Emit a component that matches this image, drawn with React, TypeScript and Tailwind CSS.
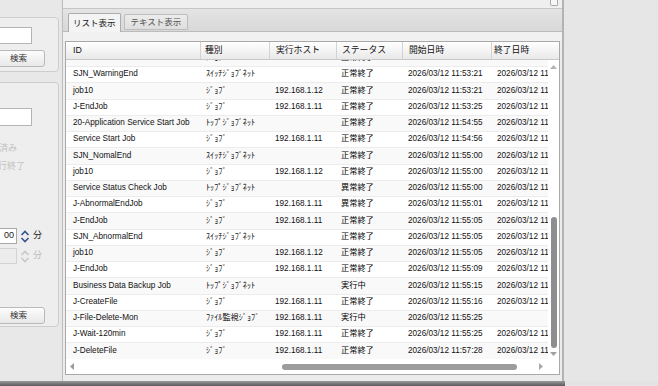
const FONT = "font-['Liberation_Sans','Noto_Sans_CJK_JP',sans-serif]";

type Row = [string, string, string, string, string, string];

const rows: Row[] = [
  ['Service Health Check Job', 'ｼﾞｮﾌﾞ', '192.168.1.11', '正常終了', '2026/03/12 11:53:17', '2026/03/12 11:53:19'],
  ['SJN_WarningEnd', 'ｽｲｯﾁｼﾞｮﾌﾞﾈｯﾄ', '', '正常終了', '2026/03/12 11:53:21', '2026/03/12 11:53:21'],
  ['job10', 'ｼﾞｮﾌﾞ', '192.168.1.12', '正常終了', '2026/03/12 11:53:21', '2026/03/12 11:53:24'],
  ['J-EndJob', 'ｼﾞｮﾌﾞ', '192.168.1.11', '正常終了', '2026/03/12 11:53:25', '2026/03/12 11:53:27'],
  ['20-Application Service Start Job', 'ﾄｯﾌﾟｼﾞｮﾌﾞﾈｯﾄ', '', '正常終了', '2026/03/12 11:54:55', '2026/03/12 11:55:10'],
  ['Service Start Job', 'ｼﾞｮﾌﾞ', '192.168.1.11', '正常終了', '2026/03/12 11:54:56', '2026/03/12 11:54:59'],
  ['SJN_NomalEnd', 'ｽｲｯﾁｼﾞｮﾌﾞﾈｯﾄ', '', '正常終了', '2026/03/12 11:55:00', '2026/03/12 11:55:00'],
  ['job10', 'ｼﾞｮﾌﾞ', '192.168.1.12', '正常終了', '2026/03/12 11:55:00', '2026/03/12 11:55:03'],
  ['Service Status Check Job', 'ﾄｯﾌﾟｼﾞｮﾌﾞﾈｯﾄ', '', '異常終了', '2026/03/12 11:55:00', '2026/03/12 11:55:08'],
  ['J-AbnormalEndJob', 'ｼﾞｮﾌﾞ', '192.168.1.11', '異常終了', '2026/03/12 11:55:01', '2026/03/12 11:55:04'],
  ['J-EndJob', 'ｼﾞｮﾌﾞ', '192.168.1.11', '正常終了', '2026/03/12 11:55:05', '2026/03/12 11:55:07'],
  ['SJN_AbnormalEnd', 'ｽｲｯﾁｼﾞｮﾌﾞﾈｯﾄ', '', '正常終了', '2026/03/12 11:55:05', '2026/03/12 11:55:05'],
  ['job10', 'ｼﾞｮﾌﾞ', '192.168.1.12', '正常終了', '2026/03/12 11:55:05', '2026/03/12 11:55:08'],
  ['J-EndJob', 'ｼﾞｮﾌﾞ', '192.168.1.11', '正常終了', '2026/03/12 11:55:09', '2026/03/12 11:55:11'],
  ['Business Data Backup Job', 'ﾄｯﾌﾟｼﾞｮﾌﾞﾈｯﾄ', '', '実行中', '2026/03/12 11:55:15', '2026/03/12 11:55:16'],
  ['J-CreateFile', 'ｼﾞｮﾌﾞ', '192.168.1.11', '正常終了', '2026/03/12 11:55:16', '2026/03/12 11:55:18'],
  ['J-File-Delete-Mon', 'ﾌｧｲﾙ監視ｼﾞｮﾌﾞ', '192.168.1.11', '実行中', '2026/03/12 11:55:25', ''],
  ['J-Wait-120min', 'ｼﾞｮﾌﾞ', '192.168.1.11', '正常終了', '2026/03/12 11:55:25', '2026/03/12 11:57:25'],
  ['J-DeleteFile', 'ｼﾞｮﾌﾞ', '192.168.1.11', '正常終了', '2026/03/12 11:57:28', '2026/03/12 11:57:30'],
];

const cols = 'grid grid-cols-[135px_69px_67px_66px_89px_120px]';

function Tri({ dir, color = '#a6a6a6' }: { dir: 'up' | 'down' | 'left' | 'right'; color?: string }) {
  const pts = {
    up: '0,5 3.5,1 7,5',
    down: '0,1 3.5,5 7,1',
    left: '5,0 1,3.5 5,7',
    right: '1,0 5,3.5 1,7',
  }[dir];
  return (
    <svg width="7" height="7" viewBox="0 0 7 7">
      <polygon points={pts} fill={color} />
    </svg>
  );
}

function Chevron({ up, color }: { up?: boolean; color: string }) {
  return (
    <svg width="10" height="6" viewBox="0 0 10 6">
      <path d={up ? 'M1.5 5 L5 1.5 L8.5 5' : 'M1.5 1 L5 4.5 L8.5 1'} fill="none" stroke={color} strokeWidth="1.6" />
    </svg>
  );
}

function Button({ label, className }: { label: string; className: string }) {
  return (
    <div
      className={`w-[150px] h-[17px] rounded-[3px] border border-[#b9b9b9] bg-gradient-to-b from-[#fdfdfd] to-[#e8e8e8] flex items-center justify-end pr-[17px] text-[8.5px] text-[#333] ${className}`}
    >
      {label}
    </div>
  );
}

function Spinner({ disabled, className }: { disabled?: boolean; className: string }) {
  return (
    <div className={`flex items-center justify-end ${className}`}>
      <div
        className={`w-[150px] h-[16px] border flex items-center justify-end pr-[2px] text-[9px] ${
          disabled ? 'bg-[#ececec] border-[#d2d2d2] text-[#aaa]' : 'bg-white border-[#a9a9a9] text-[#222]'
        }`}
      >
        {disabled ? '' : '00'}
      </div>
      <div className="w-[13px] ml-[1px] flex flex-col items-center gap-[1px]">
        <Chevron up color={disabled ? '#c8c8c8' : '#34558f'} />
        <Chevron color={disabled ? '#c8c8c8' : '#34558f'} />
      </div>
      <div className={`w-[14px] pl-[2px] text-[9px] ${disabled ? 'text-[#bdbdbd]' : 'text-[#222]'}`}>分</div>
    </div>
  );
}

function LeftPanel() {
  return (
    <div className="w-[60px] h-full overflow-hidden flex justify-end bg-[#e8e8e8]">
      <div className="w-[200px] shrink-0 pr-[1px] flex flex-col">
        <div className="mt-[17px] h-[55px] rounded-[4px] border border-[#cdcdcd] bg-[#eeeeee] flex flex-col items-end">
          <div className="w-[150px] h-[17px] mt-[9px] mr-[26px] bg-white border border-[#b4b4b4]" />
          <Button label="検索" className="mt-[6px] mr-[13px]" />
        </div>
        <div className="mt-[10px] h-[245px] rounded-[4px] border border-[#cdcdcd] bg-[#eeeeee] flex flex-col items-end">
          <div className="w-[150px] h-[18px] mt-[25px] mr-[26px] bg-white border border-[#b4b4b4]" />
          <div className="mt-[16px] mr-[41px] text-[9px] text-[#c2c2c2] leading-[12px] whitespace-nowrap">確認済み</div>
          <div className="mt-[6px] mr-[33px] text-[9px] text-[#c2c2c2] leading-[12px] whitespace-nowrap">実行終了</div>
          <Spinner className="mt-[56px] mr-[13px]" />
          <Spinner disabled className="mt-[4px] mr-[13px]" />
          <Button label="検索" className="mt-[43px] mr-[13px]" />
        </div>
      </div>
    </div>
  );
}

function Table() {
  return (
    <div className="mx-[2px] h-[334px] border border-[#a9a9a9] bg-white flex flex-col">
      <div className={`${cols} h-[18px] shrink-0 bg-gradient-to-b from-[#ffffff] to-[#e9e9e9] border-b border-[#c9c9c9] text-[8.8px] text-[#111]`}>
        {['ID', '種別', '実行ホスト', 'ステータス', '開始日時', '終了日時'].map((h, i) => (
          <div
            key={h}
            className={`flex items-center border-r border-[#d3d3d3] whitespace-nowrap ${
              ['pl-[7px]', 'pl-[4px]', 'pl-[6px]', 'pl-[5px]', 'pl-[6px]', 'pl-[2px]'][i]
            }`}
          >
            {h}
          </div>
        ))}
      </div>
      <div className="flex h-[299px] shrink-0">
        <div className="flex-1 overflow-hidden">
          <div className="mt-[-9.25px]">
            {rows.map((r, i) => (
              <div
                key={i}
                className={`${cols} h-[16.25px] border-b border-[#ececec] text-[8.2px] text-[#111] ${
                  i % 2 === 0 ? 'bg-[#f9f9f9]' : 'bg-white'
                }`}
              >
                <div className="pl-[7px] flex items-center whitespace-nowrap overflow-hidden">{r[0]}</div>
                <div className="pl-[5px] flex items-center whitespace-nowrap overflow-hidden">{r[1]}</div>
                <div className="pl-[5px] flex items-center whitespace-nowrap overflow-hidden">{r[2]}</div>
                <div className="pl-[4px] flex items-center whitespace-nowrap overflow-hidden text-black">{r[3]}</div>
                <div className="pl-[5px] flex items-center whitespace-nowrap overflow-hidden">{r[4]}</div>
                <div className="pl-[5px] flex items-center whitespace-nowrap overflow-hidden">{r[5]}</div>
              </div>
            ))}
          </div>
        </div>
        <div className="w-[11px] shrink-0 bg-white flex flex-col items-center">
          <div className="mt-[4px]">
            <Tri dir="up" color="#b4b4b4" />
          </div>
          <div className="mt-[146px] w-[6px] h-[131px] rounded-full bg-[#8e8e8e]" />
          <div className="mt-[3px]">
            <Tri dir="down" color="#a0a0a0" />
          </div>
        </div>
      </div>
      <div className="h-[15px] shrink-0 flex items-center bg-white">
        <div className="ml-[3px]">
          <Tri dir="left" color="#9a9a9a" />
        </div>
        <div className="ml-[206px] w-[235px] h-[6px] rounded-full bg-[#9c9c9c]" />
        <div className="ml-[21px]">
          <Tri dir="right" color="#a8a8a8" />
        </div>
      </div>
    </div>
  );
}

function MainPanel() {
  return (
    <div className="ml-[2px] w-[502px] h-full border-l border-r-2 border-l-[#bdbdbd] border-r-[#b3b3b3] bg-[#ececec] flex flex-col">
      <div className="h-[9px] shrink-0 bg-[#efefef] border-b border-[#c6c6c6] flex justify-end pr-[4px]">
        <div className="w-[8px] h-[6px] border border-t-0 border-[#a8a8a8] bg-[#f7f7f7] rounded-b-[2px]" />
      </div>
      <div className="h-[23px] shrink-0 bg-gradient-to-b from-[#e4e4e4] to-[#d8d8d8] border-b border-[#bcbcbc] flex items-end pl-[5px]">
        <div className="h-[19px] mb-[-1px] px-[4px] border border-b-0 border-[#acacac] bg-[#f4f4f4] flex items-center text-[8.5px] text-[#1a1a1a] rounded-t-[2px]">
          リスト表示
        </div>
        <div className="h-[16px] ml-[3px] mb-[1px] px-[6px] border border-[#bdbdbd] bg-gradient-to-b from-[#ececec] to-[#dedede] flex items-center text-[8.5px] text-[#555] rounded-t-[2px]">
          テキスト表示
        </div>
      </div>
      <div className="h-[9px] shrink-0 bg-[#f1f1f1]" />
      <Table />
    </div>
  );
}

export default function App() {
  return (
    <div className={`w-[658px] h-[386px] overflow-hidden bg-[#e6e6e6] flex flex-col ${FONT}`}>
      <div className="flex h-[381px] shrink-0">
        <LeftPanel />
        <MainPanel />
        <div className="flex-1 bg-[#e6e6e6]" />
      </div>
      <div className="flex h-[5px] shrink-0">
        <div className="w-[565px] bg-gradient-to-b from-[#9a9a9a] to-[#5c5c5c]" />
        <div className="flex-1 bg-[#e3e3e3]" />
      </div>
    </div>
  );
}
